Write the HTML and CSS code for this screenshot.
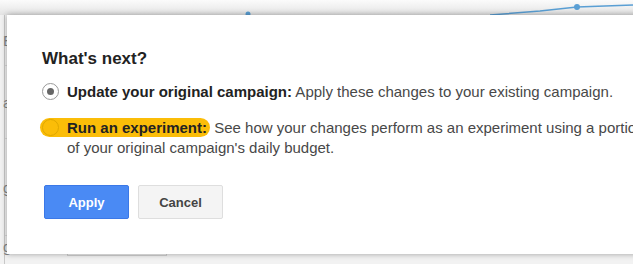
FILE: index.html
```html
<!DOCTYPE html>
<html>
<head>
<meta charset="utf-8">
<link rel="stylesheet" href="styles.css">
</head>
<body>
<div class="page">
  <div class="chart">
    <svg width="633" height="15" viewBox="0 0 633 15">
      <polyline points="490,15 540,11 577,7 633,5" fill="none" stroke="#5a9fd4" stroke-width="1.5"/>
      <circle cx="577" cy="7" r="3" fill="#5a9fd4"/>
      <circle cx="248" cy="14" r="2.5" fill="#5a9fd4"/>
    </svg>
  </div>
  <div class="table">
    <div class="row r1"><span class="cell c0">E</span></div>
    <div class="row r2"><span class="cell c0">at</span></div>
    <div class="row r3"><span class="cell c0">g</span></div>
    <div class="row last">
      <span class="cell c0">gible</span>
      <span class="cell c1">$1.50</span>
      <span class="cell c2">1</span>
      <span class="cell c3">66</span>
      <span class="cell c4">7.14%</span>
      <span class="cell c5">$0.40</span>
      <span class="cell c6">$0.40</span>
    </div>
  </div>
</div>
<div class="dialog">
  <h2 class="title">What's next?</h2>
  <p class="option opt1"><span class="radio checked"></span><b>Update your original campaign:</b> Apply these changes to your existing campaign.</p>
  <p class="option opt2"><span class="hl"><span class="radio yellow"></span><b>Run an experiment:</b></span> See how your changes perform as an experiment using a portion of your original campaign's daily budget.</p>
  <div class="buttons">
    <button class="btn primary">Apply</button>
    <button class="btn">Cancel</button>
  </div>
</div>
</body>
</html>
```
FILE: styles.css
```css
html, body { margin: 0; padding: 0; }
body {
  width: 633px; height: 264px; overflow: hidden; position: relative;
  background: #f2f2f2;
  font-family: "Liberation Sans", Arial, sans-serif;
}
.page { width: 633px; height: 264px; }
.chart { height: 15px; background: linear-gradient(#fbfbfb, #e4e4e4); }
.chart svg { display: block; }
.table { border-left: 1px solid #c8c8c8; margin-left: 4px; }
.row { border-bottom: 1px solid #dcdcdc; color: #888; font-size: 15px; display: flex; align-items: center; }
.row.r1 { height: 50px; }
.row.r2 { height: 72px; }
.row.r3 { height: 96px; }
.row.last { height: 30px; border: 0; align-items: flex-start; padding-top: 2px; }
.cell { display: block; }
.c0 { width: 60px; margin-left: -2px; }
.c1 { margin-left: 4px; width: 98px; text-align: center; border: 1px solid #d0d0d0; border-top: 0; height: 17px; }
.c2 { margin-left: 50px; }
.c3 { margin-left: 60px; }
.c4 { margin-left: 30px; }
.c5 { margin-left: 80px; }
.c6 { margin-left: 40px; }
.dialog {
  position: absolute; left: 7px; top: 15px; width: 680px; height: 239px;
  background: #fff; box-shadow: 0 0 6px rgba(0,0,0,0.35);
  box-sizing: border-box; padding: 34px 0 0 35px;
  color: #444;
}
.title { margin: 0 0 13px; font-size: 17px; font-weight: bold; color: #222; line-height: 20px; }
.option {
  margin: 0; font-size: 15px; line-height: 20px; color: #484848; width: 588px;
  padding-left: 25px; text-indent: -25px;
}
.opt1 { margin-bottom: 16px; }
.option b { color: #222; }
.radio {
  display: inline-block; vertical-align: middle; text-indent: 0;
  width: 17px; height: 17px; border-radius: 50%; box-sizing: border-box;
  border: 1px solid #9a9a9a; background: #fff; margin: -3px 8px 0 0; position: relative;
}
.radio.checked::after {
  content: ""; position: absolute; left: 4px; top: 4px; width: 7px; height: 7px; border-radius: 50%; background: #666;
}
.radio.yellow { background: #fbbd08; border-color: #e0a800; }
.hl {
  display: inline-block; vertical-align: top; text-indent: 0; background: #fbbd08; border-radius: 10px;
  height: 19px; line-height: 19px; padding: 0 3px 0 2px; margin-left: -2px; color: #222;
}
.buttons { display: flex; gap: 9px; margin-top: 27px; margin-left: 2px; }
.btn {
  width: 85px; height: 34px; border-radius: 2px; font-family: inherit; font-size: 13px; font-weight: bold;
  border: 1px solid #dedede; background: #f4f4f4; color: #444; padding: 0;
}
.btn.primary { background: #4a8af4; border-color: #3b78e7; color: #fff; }
```
